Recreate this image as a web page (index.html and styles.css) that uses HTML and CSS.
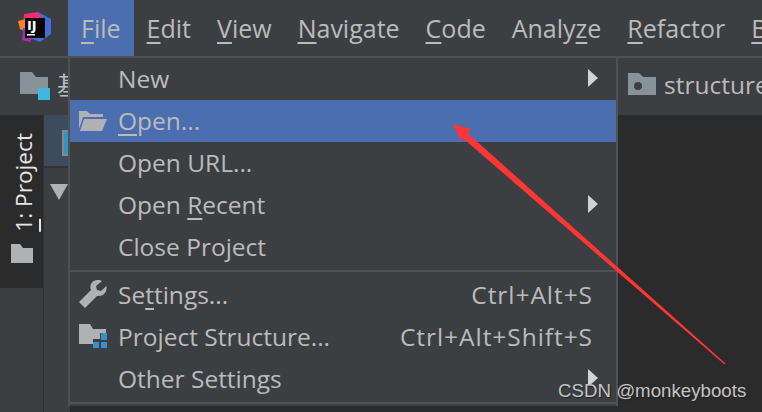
FILE: index.html
```html
<!DOCTYPE html>
<html lang="en">
<head>
<title>File menu</title>
<link rel="stylesheet" href="styles.css">
</head>
<body>
<div class="window">
  <div class="menubar">
    <div class="logo">
      <svg width="36" height="36" viewBox="0 0 36 36">
        <polygon points="20,2 33,9 33,24 22,32 10,27 12,8" fill="#3f6fd8"/>
        <polygon points="6,4 20,2 26,12 8,28 5,18" fill="#f02c72"/>
        <polygon points="0,11 8,9 8,22 2,19" fill="#f7822a"/>
        <polygon points="5,18 20,20 12,32 4,30" fill="#a02fb0"/>
        <rect x="7" y="8" width="20" height="20" fill="#000"/>
        <rect x="9" y="24" width="8" height="1.500" fill="#fff"/>
      </svg>
      <span class="logo-text">IJ</span>
    </div>
    <div class="menu-title active"><u>F</u>ile</div>
    <div class="menu-title"><u>E</u>dit</div>
    <div class="menu-title"><u>V</u>iew</div>
    <div class="menu-title"><u>N</u>avigate</div>
    <div class="menu-title"><u>C</u>ode</div>
    <div class="menu-title">Analy<u>z</u>e</div>
    <div class="menu-title"><u>R</u>efactor</div>
    <div class="menu-title"><u>B</u>uild</div>
  </div>

  <div class="toolbar">
    <div class="crumb">
      <svg class="crumb-icon" width="32" height="30" viewBox="0 0 32 30">
        <path d="M0 0H12L16 5H28V22H0Z" fill="#87939a"/>
        <rect x="18" y="16" width="12" height="12" fill="#40b6e0"/>
      </svg>
      <span class="crumb-name">基础</span>
    </div>
    <div class="tab">
      <svg width="28" height="22" viewBox="0 0 28 22">
        <path d="M0 0H11L15 4H28V22H0Z" fill="#87939a"/>
        <circle cx="10" cy="13" r="4" fill="#3c3f41"/>
      </svg>
      <span>structure</span>
    </div>
  </div>

  <div class="main">
    <div class="side-tabs">
      <div class="project-tab">
        <span class="project-label"><u>1</u>: Project</span>
        <svg width="22" height="19" viewBox="0 0 22 19">
          <path d="M0 0H9L12 4H22V19H0Z" fill="#afb1b3"/>
        </svg>
      </div>
    </div>
    <div class="tree">
      <div class="tree-head"><span class="tree-icon"></span></div>
      <div class="tree-arrow"></div>
    </div>
    <div class="editor"></div>
  </div>

  <div class="file-menu">
    <div class="item"><span class="item-icon"></span><span class="item-name">New</span><span class="sub"></span></div>
    <div class="item selected">
      <span class="item-icon">
        <svg width="30" height="24" viewBox="0 0 30 24">
          <path d="M1 3V21L5 9H25V6H12L9 3Z" fill="#afb1b3"/>
          <path d="M6 11H29L24 23H2Z" fill="#afb1b3"/>
        </svg>
      </span>
      <span class="item-name"><u>O</u>pen...</span>
    </div>
    <div class="item"><span class="item-icon"></span><span class="item-name">Open URL...</span></div>
    <div class="item"><span class="item-icon"></span><span class="item-name">Open <u>R</u>ecent</span><span class="sub"></span></div>
    <div class="item"><span class="item-icon"></span><span class="item-name">Close Project</span></div>
    <div class="sep"></div>
    <div class="item">
      <span class="item-icon">
        <svg width="30" height="30" viewBox="0 0 30 30">
          <path d="M1 23L13 11C11 6 14 1 20 1C22 1 23 1.500 24 2L18 7L19 11L23 12L28.500 7C29.500 12 26 18 19 17L7 29Z" fill="#afb1b3"/>
        </svg>
      </span>
      <span class="item-name">Se<u>t</u>tings...</span>
      <span class="keys">Ctrl+Alt+S</span>
    </div>
    <div class="item">
      <span class="item-icon">
        <svg width="30" height="26" viewBox="0 0 30 26">
          <path d="M1 1H12L15 6H28V10H22V16H15V21H1Z" fill="#afb1b3"/>
          <rect x="23" y="10" width="6" height="7" fill="#3592c4"/>
          <rect x="15" y="19" width="6" height="6" fill="#3592c4"/>
          <rect x="23" y="19" width="6" height="6" fill="#3592c4"/>
        </svg>
      </span>
      <span class="item-name">Project Structure...</span>
      <span class="keys">Ctrl+Alt+Shift+S</span>
    </div>
    <div class="item"><span class="item-icon"></span><span class="item-name">Other Settings</span><span class="sub"></span></div>
    <div class="sep"></div>
  </div>

  <svg class="red-arrow" width="762" height="412" viewBox="0 0 762 412">
    <polygon points="453,124 471,129 467.300,132.900 725.500,363.500 724.500,364.500 462.700,138.100 461,141" fill="#fd3535"/>
  </svg>
  <div class="watermark">CSDN @monkeyboots</div>
</div>
</body>
</html>
```

FILE: styles.css
```css
* {
  box-sizing: border-box;
}
html, body {
  margin: 0;
  padding: 0;
}
body {
  font-family: "Open Sans", "Noto Sans CJK SC", sans-serif;
  font-size: 24.5px;
  color: #bbbbbb;
  background: #3c3f41;
}
u {
  text-decoration-thickness: 2px;
  text-underline-offset: 4px;
}
.window {
  position: relative;
  width: 762px;
  height: 412px;
  overflow: hidden;
  display: flex;
  flex-direction: column;
}
.menubar {
  display: flex;
  flex: none;
  height: 58px;
  border-bottom: 2px solid #515151;
  white-space: nowrap;
}
.logo {
  position: relative;
  width: 68px;
  flex: none;
  padding: 10px 0 0 18px;
}
.logo-text {
  position: absolute;
  left: 27px;
  top: 18px;
  font-family: "DejaVu Sans", sans-serif;
  font-size: 13px;
  font-weight: bold;
  color: #fff;
}
.menu-title {
  padding: 0 13px;
  line-height: 56px;
  height: 56px;
  font-size: 25px;
}
.menu-title.active {
  background: #4b6eaf;
}
.toolbar {
  display: flex;
  flex: none;
  height: 57px;
}
.crumb {
  width: 618px;
  flex: none;
  display: flex;
  padding: 14px 0 0 20px;
  gap: 5px;
}
.crumb-icon {
  flex: none;
}
.crumb-name {
  line-height: 28px;
}
.tab {
  flex: 1;
  display: flex;
  align-items: center;
  gap: 8px;
  padding: 0 0 5px 10px;
  white-space: nowrap;
}
.main {
  flex: 1;
  display: flex;
}
.side-tabs {
  width: 44px;
  flex: none;
  border-right: 1px solid #323232;
}
.project-tab {
  height: 173px;
  background: #2b2b2b;
  display: flex;
  flex-direction: column;
  align-items: center;
  justify-content: flex-end;
  padding-bottom: 25px;
  gap: 12px;
}
.project-label {
  writing-mode: vertical-rl;
  transform: rotate(180deg);
  margin-left: 3px;
  font-size: 22.700px;
  color: #e6e6e6;
  white-space: nowrap;
}
.tree {
  width: 26px;
  flex: none;
}
.tree-head {
  height: 53px;
  background: #3d4b5c;
  border-bottom: 2px solid #323232;
  padding: 15px 0 0 18px;
}
.tree-icon {
  display: block;
  width: 10px;
  height: 26px;
  border: 2px solid #7f8b91;
  background: #3592c4;
}
.tree-arrow {
  margin: 16px 0 0 6px;
  width: 0;
  height: 0;
  border-left: 9px solid transparent;
  border-right: 9px solid transparent;
  border-top: 16px solid #afb1b3;
}
.editor {
  flex: 1;
  background: #2b2b2b;
}
.file-menu {
  position: absolute;
  left: 68px;
  top: 56px;
  width: 550px;
  background: #3c3f41;
  border-left: 2px solid #515151;
  border-right: 2px solid #515151;
  border-top: 2px solid #515151;
}
.item {
  display: flex;
  align-items: center;
  height: 42px;
  padding: 0 24px 2px 0;
  white-space: nowrap;
}
.item.selected {
  background: #4b6eaf;
}
.item-icon {
  width: 48px;
  flex: none;
  display: flex;
  padding-left: 8px;
}
.item-name {
  flex: 1;
}
.keys {
  flex: none;
  letter-spacing: 0.950px;
  margin-right: -1px;
}
.sub {
  width: 0;
  height: 0;
  margin-right: -6px;
  border-top: 9px solid transparent;
  border-bottom: 9px solid transparent;
  border-left: 10px solid #d0d2d6;
}
.sep {
  height: 2px;
  background: #515151;
  margin: 2px 0;
}
.red-arrow {
  position: absolute;
  left: 0;
  top: 0;
}
.watermark {
  position: absolute;
  left: 558px;
  top: 380px;
  font-family: "Liberation Sans", sans-serif;
  font-size: 18.700px;
  color: #c4c4c4;
  text-shadow: 1px 1px 1px #222;
  white-space: nowrap;
}
```
